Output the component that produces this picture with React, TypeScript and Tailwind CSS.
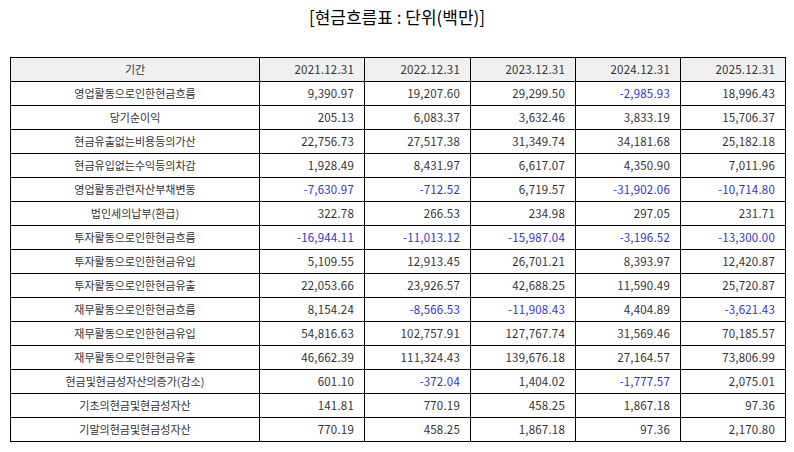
const years = ["2021.12.31", "2022.12.31", "2023.12.31", "2024.12.31", "2025.12.31"];

const rows: [string, string[]][] = [
  ["영업활동으로인한현금흐름", ["9,390.97", "19,207.60", "29,299.50", "-2,985.93", "18,996.43"]],
  ["당기순이익", ["205.13", "6,083.37", "3,632.46", "3,833.19", "15,706.37"]],
  ["현금유출없는비용등의가산", ["22,756.73", "27,517.38", "31,349.74", "34,181.68", "25,182.18"]],
  ["현금유입없는수익등의차감", ["1,928.49", "8,431.97", "6,617.07", "4,350.90", "7,011.96"]],
  ["영업활동관련자산부채변동", ["-7,630.97", "-712.52", "6,719.57", "-31,902.06", "-10,714.80"]],
  ["법인세의납부(환급)", ["322.78", "266.53", "234.98", "297.05", "231.71"]],
  ["투자활동으로인한현금흐름", ["-16,944.11", "-11,013.12", "-15,987.04", "-3,196.52", "-13,300.00"]],
  ["투자활동으로인한현금유입", ["5,109.55", "12,913.45", "26,701.21", "8,393.97", "12,420.87"]],
  ["투자활동으로인한현금유출", ["22,053.66", "23,926.57", "42,688.25", "11,590.49", "25,720.87"]],
  ["재무활동으로인한현금흐름", ["8,154.24", "-8,566.53", "-11,908.43", "4,404.89", "-3,621.43"]],
  ["재무활동으로인한현금유입", ["54,816.63", "102,757.91", "127,767.74", "31,569.46", "70,185.57"]],
  ["재무활동으로인한현금유출", ["46,662.39", "111,324.43", "139,676.18", "27,164.57", "73,806.99"]],
  ["현금및현금성자산의증가(감소)", ["601.10", "-372.04", "1,404.02", "-1,777.57", "2,075.01"]],
  ["기초의현금및현금성자산", ["141.81", "770.19", "458.25", "1,867.18", "97.36"]],
  ["기말의현금및현금성자산", ["770.19", "458.25", "1,867.18", "97.36", "2,170.80"]],
];

export default function App() {
  return (
    <div
      className="w-[794px] h-[452px] bg-white text-[#333]"
      style={{ fontFamily: '"Noto Sans CJK KR", "Noto Sans", sans-serif' }}
    >
      <h1 className="pt-[5px] h-[57px] text-center text-[17px] leading-[24px] text-black">
        [현금흐름표 : 단위(백만)]
      </h1>
      <div className="px-[10px]">
        <table className="w-[775px] table-fixed border-collapse text-[11px]">
          <colgroup>
            <col className="w-[249px]" />
            <col className="w-[105px]" />
            <col className="w-[106px]" />
            <col className="w-[105px]" />
            <col className="w-[105px]" />
            <col className="w-[105px]" />
          </colgroup>
          <thead>
            <tr className="h-[24px] bg-[#f0f0f0]">
              <th className="border border-black font-normal text-center p-0">기간</th>
              {years.map((y) => (
                <th
                  key={y}
                  className="border border-black font-normal text-right pr-[10px] p-0 text-[11.5px] tracking-[0.2px]"
                >
                  {y}
                </th>
              ))}
            </tr>
          </thead>
          <tbody>
            {rows.map(([label, vals]) => (
              <tr key={label} className="h-[24px]">
                <td className="border border-black text-center p-0">{label}</td>
                {vals.map((v, i) => (
                  <td
                    key={i}
                    className={
                      v.startsWith("-")
                        ? "border border-black text-right pr-[10px] p-0 text-[11.5px] tracking-[0.2px] text-[#3232d2]"
                        : "border border-black text-right pr-[10px] p-0 text-[11.5px] tracking-[0.2px]"
                    }
                  >
                    {v}
                  </td>
                ))}
              </tr>
            ))}
          </tbody>
        </table>
      </div>
    </div>
  );
}
